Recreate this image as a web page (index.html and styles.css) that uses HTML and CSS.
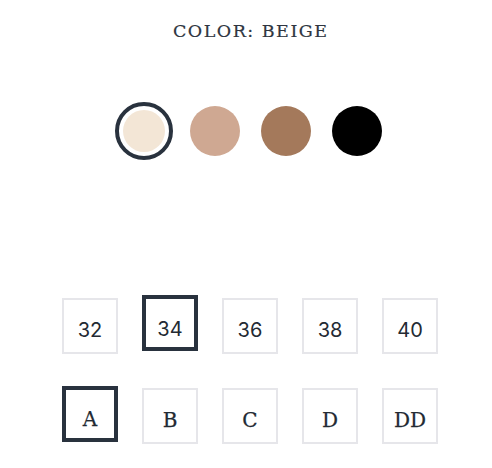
FILE: index.html
```html
<!DOCTYPE html>
<html>
<head>
<meta charset="utf-8">
<link rel="stylesheet" href="styles.css">
</head>
<body>
<div class="page">
  <div class="title">COLOR: BEIGE</div>
  <div class="swatches">
    <div class="swatch selected"><span class="dot beige"></span></div>
    <div class="swatch"><span class="dot tan"></span></div>
    <div class="swatch"><span class="dot brown"></span></div>
    <div class="swatch"><span class="dot black"></span></div>
  </div>
  <div class="sizes band">
    <div class="box">32</div>
    <div class="box selected">34</div>
    <div class="box">36</div>
    <div class="box">38</div>
    <div class="box">40</div>
  </div>
  <div class="sizes cup">
    <div class="box selected">A</div>
    <div class="box">B</div>
    <div class="box">C</div>
    <div class="box">D</div>
    <div class="box">DD</div>
  </div>
</div>
</body>
</html>
```

FILE: styles.css
```css
html, body {
  margin: 0;
  padding: 0;
  background: #ffffff;
}
.page {
  margin-left: 8px;
  width: 484px;
  display: flex;
  flex-direction: column;
  align-items: center;
  color: #2b323d;
}
.title {
  margin-top: 20px;
  font-family: "DejaVu Serif", serif;
  font-size: 17.5px;
  line-height: 22px;
  letter-spacing: 1.5px;
  padding-left: 1.5px;
  color: #2e3540;
  -webkit-text-stroke: 0.2px #2e3540;
}
.swatches {
  margin-top: 60px;
  display: flex;
  gap: 13px;
}
.swatch {
  width: 58px;
  height: 58px;
  box-sizing: border-box;
  border-radius: 50%;
  display: flex;
  align-items: center;
  justify-content: center;
}
.swatch.selected {
  border: 4px solid #29323e;
}
.dot {
  display: block;
  width: 50px;
  height: 50px;
  border-radius: 50%;
}
.swatch.selected .dot {
  width: 42px;
  height: 42px;
}
.beige { background: #f3e6d6; }
.tan { background: #cfa892; }
.brown { background: #a4795b; }
.black { background: #000000; }

.sizes {
  display: flex;
  gap: 24px;
  align-items: flex-start;
}
.band {
  margin-top: 138px;
  font-family: "Inter", sans-serif;
  font-size: 20px;
}
.cup {
  margin-top: 34px;
  font-family: "DejaVu Serif", serif;
  font-size: 20px;
}
.box {
  width: 56px;
  height: 56px;
  box-sizing: border-box;
  border: 2px solid #e6e6ea;
  display: flex;
  align-items: center;
  justify-content: center;
  color: #232a33;
  padding-top: 7px;
}
.cup .box {
  -webkit-text-stroke: 0.25px #232a33;
}
.box.selected {
  border: 4px solid #29323e;
}
.band .box.selected {
  margin-top: -3px;
  margin-bottom: 3px;
  padding-top: 12px;
}
.cup .box.selected {
  margin-top: -2px;
  margin-bottom: 2px;
  padding-top: 10px;
}
```
